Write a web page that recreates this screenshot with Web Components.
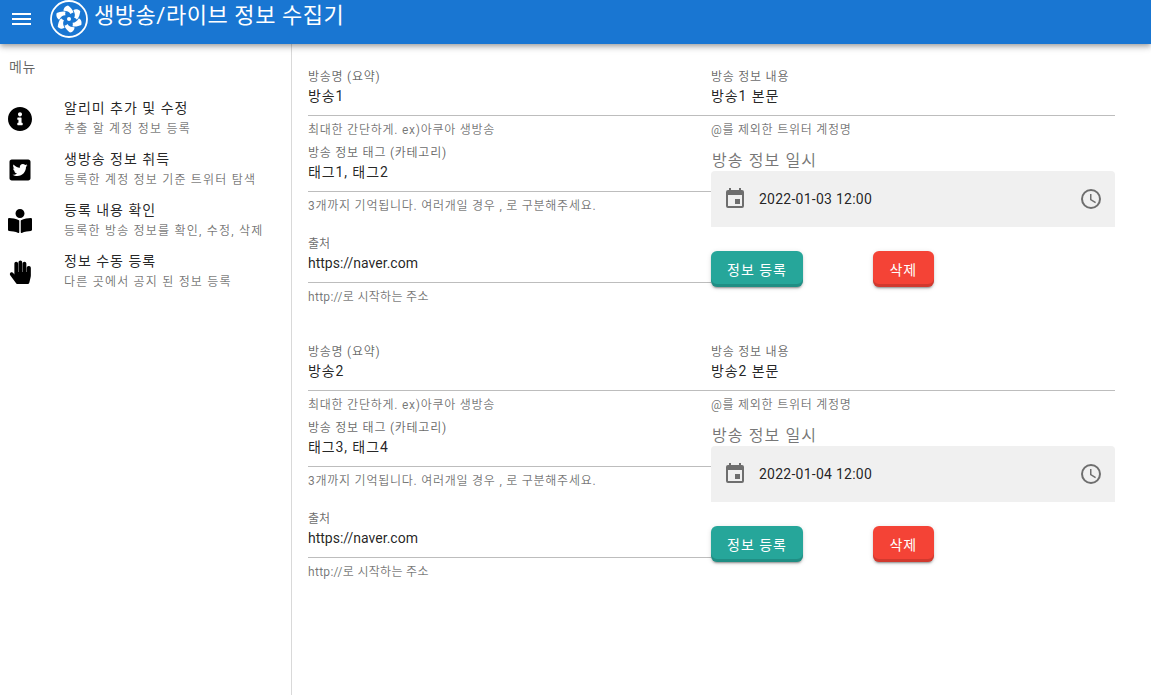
<!DOCTYPE html>
<html lang="ko">
<head>
  <meta charset="UTF-8" />
  <title>생방송/라이브 정보 수집기</title>
  <style>
    html, body { margin: 0; height: 100%; overflow: hidden; }
    body {
      font-family: Roboto, "Noto Sans CJK KR", sans-serif;
      color: rgba(0, 0, 0, .87);
      background: #fff;
    }
  </style>
</head>
<body>
  <app-shell>
    <app-bar slot="bar" heading="생방송/라이브 정보 수집기"></app-bar>
    <nav-drawer slot="nav" heading="메뉴">
      <nav-item icon="info" heading="알리미 추가 및 수정" sub="추출 할 계정 정보 등록"></nav-item>
      <nav-item icon="twitter" heading="생방송 정보 취득" sub="등록한 계정 정보 기준 트위터 탐색"></nav-item>
      <nav-item icon="reader" heading="등록 내용 확인" sub="등록한 방송 정보를 확인, 수정, 삭제"></nav-item>
      <nav-item icon="hand" heading="정보 수동 등록" sub="다른 곳에서 공지 된 정보 등록"></nav-item>
    </nav-drawer>
    <stream-form name="방송1" body-text="방송1 본문" tags="태그1, 태그2" url="https://naver.com" date="2022-01-03 12:00"></stream-form>
    <stream-form name="방송2" body-text="방송2 본문" tags="태그3, 태그4" url="https://naver.com" date="2022-01-04 12:00"></stream-form>
  </app-shell>

  <script>
    const ICONS = {
      info: '<svg width="24" height="24" viewBox="8 8 496 496"><path d="M256 8C119.043 8 8 119.083 8 256c0 136.997 111.043 248 248 248s248-111.003 248-248C504 119.083 392.957 8 256 8zm0 110c23.196 0 42 18.804 42 42s-18.804 42-42 42-42-18.804-42-42 18.804-42 42-42zm56 254c0 6.627-5.373 12-12 12h-88c-6.627 0-12-5.373-12-12v-24c0-6.627 5.373-12 12-12h12v-64h-12c-6.627 0-12-5.373-12-12v-24c0-6.627 5.373-12 12-12h64c6.627 0 12 5.373 12 12v100h12c6.627 0 12 5.373 12 12v24z"/></svg>',
      twitter: '<svg width="24" height="24" viewBox="-32 0 512 512"><path d="M400 32H48C21.5 32 0 53.5 0 80v352c0 26.5 21.5 48 48 48h352c26.5 0 48-21.5 48-48V80c0-26.5-21.5-48-48-48zm-48.900 158.800c.2 2.800.2 5.700.2 8.500 0 86.700-66 186.600-186.600 186.600-37.200 0-71.700-10.800-100.700-29.400 5.300.6 10.400.8 15.800.8 30.700 0 58.900-10.400 81.400-28-28.800-.6-53-19.500-61.300-45.500 10.100 1.500 19.200 1.500 29.600-1.200-30-6.100-52.500-32.500-52.500-64.400v-.8c8.700 4.900 18.900 7.900 29.600 8.300a65.447 65.447 0 0 1-29.200-54.600c0-12.200 3.200-23.400 8.900-33.100 32.300 39.800 80.800 65.800 135.200 68.600-9.300-44.500 24-80.600 64-80.600 18.900 0 35.900 7.900 47.900 20.700 14.800-2.800 29-8.300 41.600-15.800-4.900 15.200-15.100 28-28.600 36 13.100-1.400 25.800-5.100 37.500-10.200-8.800 13.100-19.900 24.700-32.500 33.700z"/></svg>',
      reader: '<svg width="24" height="24" viewBox="0 0 512 512"><path d="M352 96c0-53.020-42.980-96-96-96s-96 42.980-96 96 42.980 96 96 96 96-42.980 96-96zM233.590 241.100c-59.330-36.320-155.430-46.300-203.790-49.050C13.550 191.130 0 203.510 0 219.160v222.800c0 14.350 11.610 26.320 26.540 27.090 43.660 2.290 131.990 10.680 193.040 41.430 9.370 4.720 20.430-1.710 20.430-11.870V252.560c-.01-4.670-2.320-8.950-6.420-11.460zm248.610-49.050c-48.350 2.740-144.460 12.730-203.780 49.050-4.100 2.510-6.410 6.960-6.410 11.630v245.790c0 10.190 11.090 16.630 20.490 11.900 61.040-30.720 149.320-39.110 192.970-41.400 14.930-.78 26.540-12.750 26.540-27.100V219.160c-.01-15.650-13.560-28.030-29.810-27.110z"/></svg>',
      hand: '<svg width="24" height="24" viewBox="-32 0 512 512"><path d="M408.781 128.007C386.356 127.578 368 146.036 368 168.463V256h-8V79.790c0-22.430-18.356-40.890-40.781-40.461C297.488 39.744 280 57.321 280 79.790V256h-8V48.790C272 26.360 253.644 7.900 231.219 8.329 209.488 8.744 192 26.521 192 48.790V256h-8V79.790c0-22.430-18.356-40.890-40.781-40.461C121.488 39.744 104 57.321 104 79.790v230.210l-24.100-33.100c-13-17.900-38-21.800-55.900-8.800-17.900 13-21.800 38-8.800 55.900l125.600 172.700c9 12.400 23.500 19.800 38.800 19.800h197.700c22.300 0 41.600-15.300 46.700-37l26.500-112.700a192 192 0 0 0 5-43.900V168c0-22.400-18.400-40.400-39.800-40z"/></svg>',
    };

    class AppShell extends HTMLElement {
      constructor() {
        super();
        this.attachShadow({ mode: 'open' }).innerHTML = `
          <style>
            :host { display: grid; grid-template-rows: 44px 1fr; height: 695px; }
            .body { display: grid; grid-template-columns: 292px 1fr; min-height: 0; }
            main { padding: 24px 36px 0 16px; display: flex; flex-direction: column; gap: 32px; }
          </style>
          <slot name="bar"></slot>
          <div class="body">
            <slot name="nav"></slot>
            <main><slot></slot></main>
          </div>`;
      }
    }
    customElements.define('app-shell', AppShell);

    class AppBar extends HTMLElement {
      constructor() {
        super();
        const blades = [0, 60, 120, 180, 240, 300].map(a =>
          `<path transform="rotate(${a} 19 19)" d="M20.5 14C19.3 11.8 17 10.800 13.500 10.800 13.300 8.500 15 6 18 5.400 20 7 23 9.500 23.500 12.500 22.500 12.500 21.500 13 20.500 14z"/>`).join('');
        this.attachShadow({ mode: 'open' }).innerHTML = `
          <style>
            :host {
              display: flex; align-items: center; height: 44px; background: #1976d2; color: #fff;
              position: relative; z-index: 2; padding-left: 12px;
              box-shadow: 0 2px 4px -1px rgba(0,0,0,.2), 0 4px 5px 0 rgba(0,0,0,.14), 0 1px 10px 0 rgba(0,0,0,.12);
            }
            .burger { width: 19px; height: 12px; display: flex; flex-direction: column; justify-content: space-between; margin-top: -6px; }
            .burger i { display: block; height: 2px; background: #fff; }
            svg { margin-left: 19px; margin-top: -6px; flex: none; }
            h1 { font-size: 22px; font-weight: 400; margin: -19px 0 0 6px; letter-spacing: .55px; white-space: nowrap; }
          </style>
          <div class="burger"><i></i><i></i><i></i></div>
          <svg width="38" height="38" viewBox="0 0 38 38">
            <circle cx="19" cy="19" r="18" fill="none" stroke="#fff" stroke-width="1.8"/>
            <g fill="#fff">${blades}<circle cx="19" cy="19" r="2"/></g>
          </svg>
          <h1>${this.getAttribute('heading')}</h1>`;
      }
    }
    customElements.define('app-bar', AppBar);

    class NavDrawer extends HTMLElement {
      constructor() {
        super();
        this.attachShadow({ mode: 'open' }).innerHTML = `
          <style>
            :host { display: block; border-right: 1px solid #d9d9d9; height: 100%; }
            .head { font-size: 14px; color: rgba(0,0,0,.6); padding: 12px 9px 0; height: 37px; line-height: 22px; letter-spacing: .5px; }
            .list { display: flex; flex-direction: column; }
          </style>
          <div class="head">${this.getAttribute('heading')}</div>
          <div class="list"><slot></slot></div>`;
      }
    }
    customElements.define('nav-drawer', NavDrawer);

    class NavItem extends HTMLElement {
      constructor() {
        super();
        this.attachShadow({ mode: 'open' }).innerHTML = `
          <style>
            :host { display: flex; align-items: center; height: 51px; padding-left: 8px; }
            svg { display: block; fill: #000; }
            .icon { flex: none; }
            .text { margin-left: 32px; padding-bottom: 1px; }
            .title { font-size: 14px; line-height: 20px; color: rgba(0,0,0,.87); white-space: nowrap; letter-spacing: 1px; }
            .sub { font-size: 12px; line-height: 20px; margin-top: 1px; color: rgba(0,0,0,.55); white-space: nowrap; letter-spacing: 1.2px; }
          </style>
          <div class="icon">${ICONS[this.getAttribute('icon')]}</div>
          <div class="text">
            <div class="title">${this.getAttribute('heading')}</div>
            <div class="sub">${this.getAttribute('sub')}</div>
          </div>`;
      }
    }
    customElements.define('nav-item', NavItem);

    class TextField extends HTMLElement {
      constructor() {
        super();
        this.attachShadow({ mode: 'open' }).innerHTML = `
          <style>
            :host { display: block; }
            div { box-sizing: border-box; }
            .label { font-size: 12px; line-height: 18px; height: 16px; color: rgba(0,0,0,.6); letter-spacing: .75px; }
            .value { font-size: 14px; line-height: 20px; height: 32px; padding-top: 2px; border-bottom: 1px solid #bdbdbd; color: rgba(0,0,0,.87); letter-spacing: .9px; }
            .hint { font-size: 12px; line-height: 18px; height: 28px; padding-top: 5px; color: rgba(0,0,0,.55); letter-spacing: .75px; }
            :host([plain]) .label { letter-spacing: 0; }
            :host([plain]) .value { letter-spacing: 0; }
            :host([plain]) .hint { letter-spacing: .3px; }
          </style>
          <div class="label">${this.getAttribute('label')}</div>
          <div class="value">${this.getAttribute('value')}</div>
          <div class="hint">${this.getAttribute('hint')}</div>`;
      }
    }
    customElements.define('text-field', TextField);

    class DateField extends HTMLElement {
      constructor() {
        super();
        this.attachShadow({ mode: 'open' }).innerHTML = `
          <style>
            :host { display: block; }
            .label { font-size: 16px; line-height: 20px; height: 20px; padding-left: 1px; color: rgba(0,0,0,.55); letter-spacing: 1.1px; }
            .box {
              display: flex; align-items: center; height: 56px; background: #f0f0f0;
              border-radius: 4px 4px 0 0; padding: 0 12px; font-size: 14px; color: rgba(0,0,0,.87);
            }
            .date { margin-left: 12px; flex: 1; letter-spacing: .25px; }
            svg { fill: rgba(0,0,0,.54); flex: none; }
          </style>
          <div class="label">${this.getAttribute('label')}</div>
          <div class="box">
            <svg width="24" height="24" viewBox="0 0 24 24"><path d="M19 3h-1V1h-2v2H8V1H6v2H5a2 2 0 0 0-2 2v14a2 2 0 0 0 2 2h14a2 2 0 0 0 2-2V5a2 2 0 0 0-2-2zm0 16H5V8h14v11zM17 12h-5v5h5v-5z"/></svg>
            <span class="date">${this.getAttribute('value')}</span>
            <svg width="24" height="24" viewBox="0 0 24 24"><path d="M12 2a10 10 0 1 0 0 20 10 10 0 0 0 0-20zm0 18a8 8 0 1 1 0-16 8 8 0 0 1 0 16zm.5-13H11v6l5.200 3.200.8-1.300-4.500-2.700V7z"/></svg>
          </div>`;
      }
    }
    customElements.define('date-field', DateField);

    class RaisedBtn extends HTMLElement {
      constructor() {
        super();
        this.attachShadow({ mode: 'open' }).innerHTML = `
          <style>
            :host {
              display: inline-flex; align-items: center; justify-content: center; height: 36px;
              padding: 0 16px; border-radius: 6px; color: #fff; font-size: 14px; letter-spacing: 1px;
              background: var(--btn, #26a69a);
              box-shadow: inset 0 -3px 0 rgba(0,0,0,.14), 0 3px 1px -2px rgba(0,0,0,.2), 0 2px 2px 0 rgba(0,0,0,.14), 0 1px 5px 0 rgba(0,0,0,.12);
            }
          </style>
          <slot></slot>`;
      }
    }
    customElements.define('raised-btn', RaisedBtn);

    class StreamForm extends HTMLElement {
      constructor() {
        super();
        const a = n => this.getAttribute(n);
        this.attachShadow({ mode: 'open' }).innerHTML = `
          <style>
            :host { display: grid; grid-template-columns: 403px 1fr; height: 243px; }
            .col { display: flex; flex-direction: column; }
            text-field.src { margin-top: 15px; }
            date-field { margin-top: 7px; }
            .actions { display: flex; align-items: flex-start; margin-top: 24px; }
            .del { margin-left: 70px; padding: 0 16.4px; --btn: #f44336; }
          </style>
          <div class="col">
            <text-field label="방송명 (요약)" value="${a('name')}" hint="최대한 간단하게. ex)아쿠아 생방송"></text-field>
            <text-field label="방송 정보 태그 (카테고리)" value="${a('tags')}" hint="3개까지 기억됩니다. 여러개일 경우 , 로 구분해주세요."></text-field>
            <text-field class="src" plain label="출처" value="${a('url')}" hint="http://로 시작하는 주소"></text-field>
          </div>
          <div class="col">
            <text-field label="방송 정보 내용" value="${a('body-text')}" hint="@를 제외한 트위터 계정명"></text-field>
            <date-field label="방송 정보 일시" value="${a('date')}"></date-field>
            <div class="actions">
              <raised-btn>정보 등록</raised-btn>
              <raised-btn class="del">삭제</raised-btn>
            </div>
          </div>`;
      }
    }
    customElements.define('stream-form', StreamForm);
  </script>
</body>
</html>
